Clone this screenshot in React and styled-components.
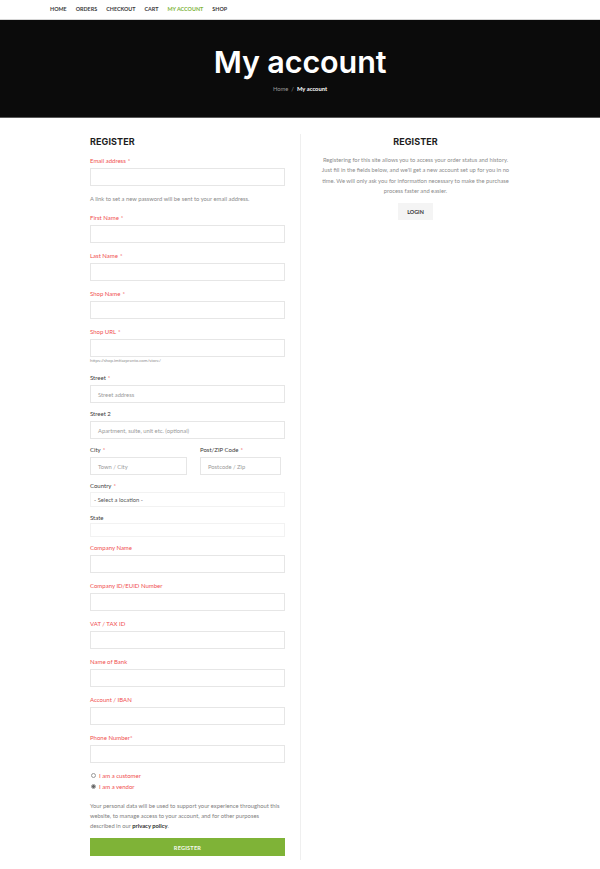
import styled, { createGlobalStyle } from 'styled-components'

const GlobalStyle = createGlobalStyle`
  html, body {
    margin: 0;
    padding: 0;
    background: #ffffff;
  }

  body {
    font-family: Lato, 'Open Sans', Arial, sans-serif;
    color: #333;
  }
`

const Nav = styled.nav`
  height: 19px;
  display: flex;
  align-items: center;
  gap: 9px;
  padding-left: 50px;
  border-bottom: 1px solid #d6d6d6;

  a {
    font-size: 5.4px;
    font-weight: 700;
    text-transform: uppercase;
    color: #3a3a3a;
    text-decoration: none;
    line-height: 1;

    &.active {
      color: #7db43a;
    }
  }
`

const Hero = styled.header`
  height: 98px;
  background: #0b0b0b;
  border-bottom: 1px solid #5a5a5a;
  box-sizing: border-box;
  padding-top: 22px;
  text-align: center;

  h1 {
    margin: 0;
    font-family: Inter, 'Noto Sans', sans-serif;
    font-weight: 600;
    font-size: 30.5px;
    line-height: 39px;
    color: #ffffff;
    letter-spacing: -0.1px;
  }

  .crumbs {
    margin-top: 4px;
    font-size: 5.8px;
    line-height: 8px;
    color: #9a9a9a;

    span {
      margin: 0 3px;
    }

    b {
      color: #ffffff;
      font-weight: 700;
    }
  }
`

const Main = styled.main`
  width: 420px;
  margin: 0 auto;
  padding-top: 16px;
  display: grid;
  grid-template-columns: 210px 210px;
`

const Column = styled.section`
  box-sizing: border-box;
  padding: 2px 15px 4px 0;

  &.aside {
    border-left: 1px solid #efefef;
    padding: 2px 0 4px 20px;
    text-align: center;
  }
`

const Heading = styled.h2`
  margin: 0 0 9px;
  font-family: Inter, 'Noto Sans', sans-serif;
  font-weight: 700;
  font-size: 9px;
  line-height: 12px;
  color: #1e1e1e;
  letter-spacing: 0.1px;

  &.center {
    margin-bottom: 7px;
  }
`

const Field = styled.div`
  margin-bottom: ${(p) => p.$mb ?? 9}px;
`

const Label = styled.label`
  display: block;
  font-size: 6px;
  line-height: 8px;
  margin-bottom: ${(p) => p.$gap ?? 3}px;
  color: ${(p) => (p.$plain ? '#3b3b3b' : '#f04f4f')};

  em {
    font-style: normal;
    color: #f04f4f;
    margin-left: ${(p) => (p.$tightStar ? 0 : 2)}px;
  }
`

const Input = styled.div`
  box-sizing: border-box;
  height: ${(p) => p.$h || 18}px;
  border: 1px solid ${(p) => (p.$faint ? '#f2f2f2' : '#e6e6e6')};
  background: #fff;
  padding-left: ${(p) => (p.$faint ? 3 : 7)}px;
  display: flex;
  align-items: center;
  font-size: 5.8px;
  color: ${(p) => (p.$value ? '#555' : '#9a9a9a')};
`

const Row = styled.div`
  display: grid;
  grid-template-columns: 97px 81px;
  column-gap: 13px;
`

const Note = styled.p`
  margin: 9px 0 11px;
  font-size: 5.8px;
  line-height: 8px;
  color: #8a8a8a;

  &.url {
    margin: 1px 0 10px;
    font-size: 4.4px;
    line-height: 6px;
    color: #8f8f8f;
  }
`

const Choice = styled.div`
  display: flex;
  align-items: center;
  gap: 3px;
  height: 11px;
  padding-left: 1px;
  font-size: 6px;
  color: #f04f4f;
`

const Dot = styled.span`
  width: 5px;
  height: 5px;
  box-sizing: border-box;
  border-radius: 50%;
  border: 1px solid #9a9a9a;
  background: ${(p) => (p.$on ? 'radial-gradient(circle, #666 0 1.3px, #e8e8e8 1.6px)' : '#fff')};
`

const Privacy = styled.p`
  margin: 9px 0 7px;
  font-size: 5.8px;
  line-height: 10px;
  color: #7e7e7e;

  a {
    color: #2f2f2f;
    font-weight: 700;
    text-decoration: none;
  }
`

const Submit = styled.button`
  display: block;
  width: 100%;
  height: 18px;
  border: 0;
  background: #7fb337;
  color: #f4f9ee;
  font-family: Lato, sans-serif;
  font-size: 5.6px;
  font-weight: 700;
  text-transform: uppercase;
  letter-spacing: 0.2px;
`

const Intro = styled.p`
  margin: 0;
  font-size: 5.75px;
  line-height: 10.3px;
  color: #8c8c8c;
`

const LoginButton = styled.button`
  margin-top: 7px;
  width: 35px;
  height: 17px;
  border: 0;
  background: #f4f4f4;
  color: #333;
  font-family: Lato, sans-serif;
  font-size: 5.4px;
  font-weight: 700;
  text-transform: uppercase;
`

const mainFields = [
  { label: 'Email address', req: true, note: 'A link to set a new password will be sent to your email address.' },
  { label: 'First Name', req: true },
  { label: 'Last Name', req: true },
  { label: 'Shop Name', req: true },
  { label: 'Shop URL', req: true, url: 'https://shop.imtiazpranto.com/store/' },
]

const vendorFields = ['Company ID/EUID Number', 'VAT / TAX ID', 'Name of Bank', 'Account / IBAN']

const Star = () => <em>*</em>

export default function App() {
  return (
    <>
      <GlobalStyle />
      <Nav>
        <a href="#">Home</a>
        <a href="#">Orders</a>
        <a href="#">Checkout</a>
        <a href="#">Cart</a>
        <a href="#" className="active">My account</a>
        <a href="#">Shop</a>
      </Nav>

      <Hero>
        <h1>My account</h1>
        <div className="crumbs">
          Home<span>/</span><b>My account</b>
        </div>
      </Hero>

      <Main>
        <Column>
          <Heading>REGISTER</Heading>

          {mainFields.map((f) => (
            <Field key={f.label} $mb={f.note || f.url ? 0 : 9}>
              <Label>
                {f.label}
                {f.req && <Star />}
              </Label>
              <Input />
              {f.note && <Note>{f.note}</Note>}
              {f.url && <Note className="url">{f.url}</Note>}
            </Field>
          ))}

          <Field $mb={7}>
            <Label $plain>Street<Star /></Label>
            <Input>Street address</Input>
          </Field>
          <Field $mb={7}>
            <Label $plain>Street 2</Label>
            <Input>Apartment, suite, unit etc. (optional)</Input>
          </Field>
          <Row>
            <Field $mb={7}>
              <Label $plain>City<Star /></Label>
              <Input>Town / City</Input>
            </Field>
            <Field $mb={7}>
              <Label $plain>Post/ZIP Code<Star /></Label>
              <Input>Postcode / Zip</Input>
            </Field>
          </Row>
          <Field $mb={7}>
            <Label $plain $gap={2}>Country<Star /></Label>
            <Input $h={15} $faint $value>- Select a location -</Input>
          </Field>
          <Field $mb={7}>
            <Label $plain $gap={1}>State</Label>
            <Input $h={14} $faint />
          </Field>
          <Field>
            <Label>Company Name</Label>
            <Input />
          </Field>

          {vendorFields.map((label) => (
            <Field key={label}>
              <Label>{label}</Label>
              <Input />
            </Field>
          ))}

          <Field $mb={7}>
            <Label $tightStar>Phone Number<Star /></Label>
            <Input />
          </Field>

          <div>
            <Choice><Dot />I am a customer</Choice>
            <Choice><Dot $on />I am a vendor</Choice>
          </div>

          <Privacy>
            Your personal data will be used to support your experience throughout this
            website, to manage access to your account, and for other purposes
            described in our <a href="#">privacy policy</a>.
          </Privacy>

          <Submit>Register</Submit>
        </Column>

        <Column className="aside">
          <Heading className="center">REGISTER</Heading>
          <Intro>
            Registering for this site allows you to access your order status and history.
            Just fill in the fields below, and we'll get a new account set up for you in no
            time. We will only ask you for information necessary to make the purchase
            process faster and easier.
          </Intro>
          <LoginButton>Login</LoginButton>
        </Column>
      </Main>
    </>
  )
}
